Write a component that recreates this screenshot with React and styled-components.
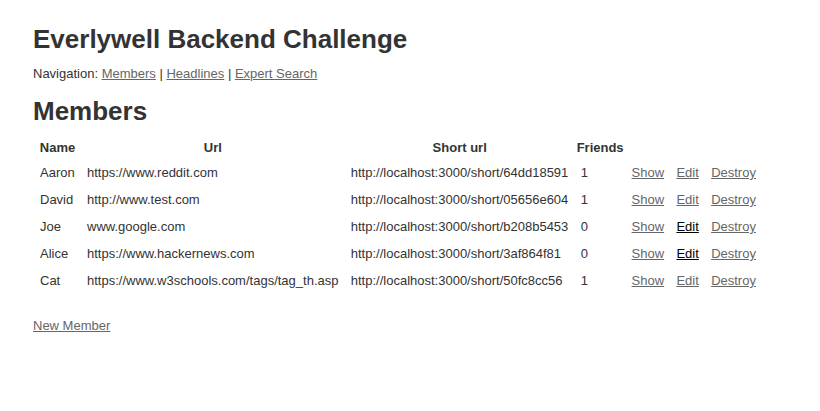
import React from "react";
import styled, { createGlobalStyle } from "styled-components";

const Global = createGlobalStyle`
  body {
    background-color: #fff;
    color: #333;
    margin: 13px 33px 33px;
    font-family: "Liberation Sans", Arial, sans-serif;
    font-size: 13px;
    line-height: 18px;
  }
`;

const Title = styled.h1`
  font-size: 26px;
  font-weight: bold;
  margin: ${(p) => (p.$section ? "19px 0 16px" : "17px 0")};
  line-height: 18px;
`;

const Nav = styled.p`
  margin: 13px 0;
  font-size: 13px;
  line-height: 18px;
`;

const Link = styled.a`
  color: ${(p) => (p.$visited ? "#666" : "#000")};
  text-decoration: underline;
  cursor: pointer;
`;

const Table = styled.table`
  border-spacing: 2px;
  border-collapse: separate;
  font-size: 13px;
  line-height: 18px;
`;

const Th = styled.th`
  padding: 1px 1px 5px;
  font-weight: bold;
  text-align: center;
`;

const Td = styled.td`
  padding: 0 5.3px 7px 5px;
`;

const Footer = styled.div`
  margin-top: 18px;
`;

const members = [
  ["Aaron", "https://www.reddit.com", "http://localhost:3000/short/64dd18591", 1, true],
  ["David", "http://www.test.com", "http://localhost:3000/short/05656e604", 1, true],
  ["Joe", "www.google.com", "http://localhost:3000/short/b208b5453", 0, false],
  ["Alice", "https://www.hackernews.com", "http://localhost:3000/short/3af864f81", 0, false],
  ["Cat", "https://www.w3schools.com/tags/tag_th.asp", "http://localhost:3000/short/50fc8cc56", 1, true],
];

export default function App() {
  return (
    <>
      <Global />
      <Title>Everlywell Backend Challenge</Title>
      <Nav>
        Navigation: <Link $visited>Members</Link> | <Link $visited>Headlines</Link> |{" "}
        <Link $visited>Expert Search</Link>
      </Nav>
      <Title $section>Members</Title>
      <Table>
        <thead>
          <tr>
            <Th>Name</Th>
            <Th>Url</Th>
            <Th>Short url</Th>
            <Th>Friends</Th>
            <Th colSpan={3}></Th>
          </tr>
        </thead>
        <tbody>
          {members.map(([name, url, short, friends, editVisited]) => (
            <tr key={name}>
              <Td>{name}</Td>
              <Td>{url}</Td>
              <Td>{short}</Td>
              <Td>{friends}</Td>
              <Td><Link $visited>Show</Link></Td>
              <Td><Link $visited={editVisited}>Edit</Link></Td>
              <Td><Link $visited>Destroy</Link></Td>
            </tr>
          ))}
        </tbody>
      </Table>
      <Footer>
        <Link $visited>New Member</Link>
      </Footer>
    </>
  );
}
